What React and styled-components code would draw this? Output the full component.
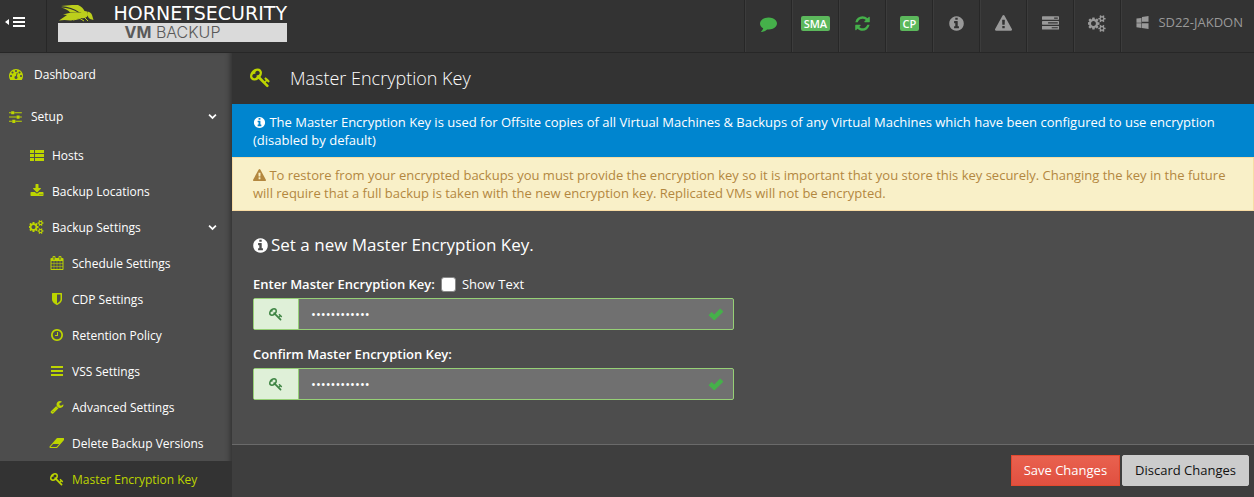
import React, { useState } from "react";
import styled, { createGlobalStyle, css } from "styled-components";

const GlobalStyle = createGlobalStyle`
  *, *::before, *::after { box-sizing: border-box; }
  body {
    margin: 0;
    background: #4d4d4d;
    color: #fff;
    font: 13px/18px "Open Sans", "Noto Sans", sans-serif;
  }
  button, input { font: inherit; }
`;

const knob = "q26 0 45 19t19 45v256q0 26-19 45t-45 19h-256q-26 0-45-19t-19-45v-256q0-26 19-45t45-19h256z";
const disc = "q0 209-103 385.5t-279.5 279.5-385.5 103-385.5-103-279.5-279.5-103-385.5 103-385.5 279.5-279.5 385.5-103 385.5 103 279.5 279.5 103 385.5z";
const dot = "q0-53-37.5-90.5t-90.5-37.5-90.5 37.5-37.5 90.5 37.5 90.5 90.5 37.5 90.5-37.5 37.5-90.5z";
const slab = "v256q0 26-19 45t-45 19h-1664q-26 0-45-19t-19-45v-256q0-26 19-45t45-19h1664q26 0 45 19t19 45z";
const smallCog = "v140q0 16-149 31-12 27-30 52 51 113 51 138 0 4-4 7-122 71-124 71-8 0-46-47t-52-68q-20 2-30 2t-30-2q-14 21-52 68t-46 47q-2 0-124-71-4-3-4-7 0-25 51-138-18-25-30-52-149-15-149-31v-140q0-16 149-31 13-29 30-52-51-113-51-138 0-4 4-7 4-2 35-20t59-34 30-16q8 0 46 46.5t52 67.5q20-2 30-2t30 2q51-71 92-112l6-2q4 0 124 70 4 3 4 7 0 25-51 138 17 23 30 52 149 15 149 31z";

const icons = {
  key: [1792, "M832 512q0-80-56-136t-136-56-136 56-56 136q0 42 19 83-41-19-83-19-80 0-136 56t-56 136 56 136 136 56 136-56 56-136q0-42-19-83 41 19 83 19 80 0 136-56t56-136zm851 704q0 17-49 66t-66 49q-9 0-28.5-16t-36.5-33-38.5-40-24.5-26l-96 96 220 220q28 28 28 68 0 42-39 81t-81 39q-40 0-68-28l-671-671q-176 131-365 131-163 0-265.5-102.5t-102.5-265.5q0-160 95-313t248-248 313-95q163 0 265.5 102.5t102.5 265.5q0 189-131 365l355 355 96-96q-3-3-26-24.5t-40-38.5-33-36.5-16-28.5q0-17 49-66t66-49q13 0 23 10 6 6 46 44.5t82 79.5 86.5 86 73 78 28.5 41z"],
  comment: [1792, "M1792 896q0 174-120 321.5t-326 233-450 85.5q-70 0-145-8-198 175-460 242-49 14-114 22-17 2-30.5-9t-17.5-29v-1q-3-4-.5-12t2-10 4.5-9.5l6-9 7-8.5 8-9q7-8 31-34.5t34.5-38 31-39.5 32.5-51 27-59 26-76q-157-89-247.5-220t-90.5-281q0-130 71-248.5t191-204.5 286-136.5 348-50.5q244 0 450 85.5t326 233 120 321.5z"],
  refresh: [1792, "M1639 1056q0 5-1 7-64 268-268 434.5t-478 166.5q-146 0-282.5-55t-243.5-157l-129 129q-19 19-45 19t-45-19-19-45v-448q0-26 19-45t45-19h448q26 0 45 19t19 45-19 45l-137 137q71 66 161 102t187 36q134 0 250-65t186-179q11-17 53-117 8-23 30-23h192q13 0 22.5 9.5t9.5 22.5zm25-800v448q0 26-19 45t-45 19h-448q-26 0-45-19t-19-45 19-45l138-138q-148-137-349-137-134 0-250 65t-186 179q-11 17-53 117-8 23-30 23h-199q-13 0-22.5-9.5t-9.5-22.5v-7q65-268 270-434.5t480-166.5q146 0 284 55.5t245 156.5l130-129q19-19 45-19t45 19 19 45z"],
  info: [1792, "M1152 1376v-160q0-14-9-23t-23-9h-96v-512q0-14-9-23t-23-9h-320q-14 0-23 9t-9 23v160q0 14 9 23t23 9h96v320h-96q-14 0-23 9t-9 23v160q0 14 9 23t23 9h448q14 0 23-9t9-23zm-128-896v-160q0-14-9-23t-23-9h-192q-14 0-23 9t-9 23v160q0 14 9 23t23 9h192q14 0 23-9t9-23zm640 416" + disc],
  warning: [1792, "M1024 1375v-190q0-14-9.5-23.5t-22.5-9.5h-192q-13 0-22.5 9.5t-9.5 23.5v190q0 14 9.5 23.5t22.5 9.5h192q13 0 22.5-9.5t9.5-23.5zm-2-374l18-459q0-12-10-19-13-11-24-11h-220q-11 0-24 11-10 7-10 21l17 457q0 10 10 16.5t24 6.5h185q14 0 23.5-6.5t10.5-16.5zm-14-934l768 1408q35 63-2 126-17 29-46.5 46t-63.5 17h-1536q-34 0-63.5-17t-46.5-46q-37-63-2-126l768-1408q17-31 47-49t65-18 65 18 47 49z"],
  tasks: [1792, "M1024 1408h640v-128h-640v128zm-384-512h1024v-128h-1024v128zm640-512h384v-128h-384v128zM1792 1216" + slab + "M1792 704" + slab + "M1792 192" + slab],
  cogs: [1920, "M832 896q0-106-75-181t-181-75-181 75-75 181 75 181 181 75 181-75 75-181zm768 512q0-52-38-90t-90-38-90 38-38 90q0 53 37.5 90.5t90.5 37.5 90.5-37.5 37.5-90.5zm0-1024q0-52-38-90t-90-38-90 38-38 90q0 53 37.5 90.5t90.5 37.5 90.5-37.5 37.5-90.5zm-384 421v185q0 10-7 19.5t-16 10.5l-155 24q-11 35-32 76 34 48 90 115 7 11 7 20 0 12-7 19-23 30-82.5 89.5t-78.5 59.5q-11 0-21-7l-115-90q-37 19-77 31-11 108-23 155-7 24-30 24h-186q-11 0-20-7.5t-10-17.5l-23-153q-34-10-75-31l-118 89q-7 7-20 7-11 0-21-8-144-133-144-160 0-9 7-19 10-14 41-53t47-61q-23-44-35-82l-152-24q-10-1-17-9.5t-7-19.5v-185q0-10 7-19.5t16-10.5l155-24q11-35 32-76-34-48-90-115-7-11-7-20 0-12 7-20 22-30 82-89t79-59q11 0 21 7l115 90q34-18 77-32 11-108 23-154 7-24 30-24h186q11 0 20 7.5t10 17.5l23 153q34 10 75 31l118-89q8-7 20-7 11 0 21 8 144 133 144 160 0 8-7 19-12 16-42 54t-45 60q23 48 34 82l152 23q10 2 17 10.5t7 19.5zm640 533" + smallCog + "M1856 314" + smallCog],
  windows: [1792, "M746 1006v651l-682-94v-557h682zm0-743v659h-682v-565zm982 743v786l-907-125v-661h907zm0-1006v794h-907v-669z"],
  dashboard: [1792, "M384 1152" + dot + "M576 704" + dot + "M1004 1185l101-382q6-26-7.5-48.5t-38.5-29.5-48 6.5-30 39.5l-101 382q-60 5-107 43.5t-63 98.5q-20 77 20 146t117 89 146-20 89-117q16-60-6-117t-72-91zM1664 1152" + dot + "M1024 512" + dot + "M1472 704" + dot + "M1792 1152q0 261-141 483-19 29-54 29h-1402q-35 0-54-29-141-221-141-483 0-182 71-348t191-286 286-191 348-71 348 71 286 191 191 286 71 348z"],
  sliders: [1536, "M0 1408h352v128H0zM704 1280" + knob + "M0 896h864v128H0zM0 384h224v128H0zM800 1408h736v128H800zM576 256" + knob + "M1216 768" + knob + "M1312 896h224v128h-224zM672 384h864v128H672z"],
  list: [1792, "M0 256h512v384H0zM640 256h1152v384H640zM0 768h512v384H0zM640 768h1152v384H640zM0 1280h512v384H0zM640 1280h1152v384H640z"],
  download: [1792, "M1344 1344q0-26-19-45t-45-19-45 19-19 45 19 45 45 19 45-19 19-45zm256 0q0-26-19-45t-45-19-45 19-19 45 19 45 45 19 45-19 19-45zm128-224v320q0 40-28 68t-68 28h-1472q-40 0-68-28t-28-68v-320q0-40 28-68t68-28h465l135 136q58 56 136 56t136-56l136-136h464q40 0 68 28t28 68zm-325-569q17 41-14 70l-448 448q-18 19-45 19t-45-19l-448-448q-31-29-14-70 17-39 59-39h256v-448q0-26 19-45t45-19h256q26 0 45 19t19 45v448h256q42 0 59 39z"],
  calendar: [1792, "M192 1664h288v-288h-288v288zm352 0h320v-288h-320v288zm-352-352h288v-320h-288v320zm352 0h320v-320h-320v320zm-352-384h288v-288h-288v288zm736 736h320v-288h-320v288zm-384-736h320v-288h-320v288zm768 736h288v-288h-288v288zm-384-352h320v-320h-320v320zm-352-864v-288q0-13-9.5-22.5t-22.5-9.5h-64q-13 0-22.5 9.5t-9.5 22.5v288q0 13 9.5 22.5t22.5 9.5h64q13 0 22.5-9.5t9.5-22.5zm736 864h288v-320h-288v320zm-384-384h320v-288h-320v288zm384 0h288v-288h-288v288zm32-480v-288q0-13-9.5-22.5t-22.5-9.5h-64q-13 0-22.5 9.5t-9.5 22.5v288q0 13 9.5 22.5t22.5 9.5h64q13 0 22.5-9.5t9.5-22.5zm384-64v1280q0 52-38 90t-90 38h-1408q-52 0-90-38t-38-90v-1280q0-52 38-90t90-38h128v-96q0-66 47-113t113-47h64q66 0 113 47t47 113v96h384v-96q0-66 47-113t113-47h64q66 0 113 47t47 113v96h128q52 0 90 38t38 90z"],
  shield: [1792, "M1344 960v-640h-448v1137q119-63 213-137 235-184 235-360zm192-768v768q0 86-33.5 170.5t-83 150-118 127.5-126.5 103-121 77.5-89.5 49.5-42.5 20q-12 6-26 6t-26-6q-16-7-42.5-20t-89.5-49.5-121-77.5-126.5-103-118-127.5-83-150-33.5-170.5v-768q0-26 19-45t45-19h1152q26 0 45 19t19 45z"],
  clock: [1792, "M1024 544v448q0 14-9 23t-23 9h-320q-14 0-23-9t-9-23v-64q0-14 9-23t23-9h224v-352q0-14 9-23t23-9h64q14 0 23 9t9 23zm416 352q0-148-73-273t-198-198-273-73-273 73-198 198-73 273 73 273 198 198 273 73 273-73 198-198 73-273zm224 0" + disc],
  bars: [1792, "M128 256h1536v256H128zM128 768h1536v256H128zM128 1280h1536v256H128z"],
  wrench: [1792, "M448 1472q0-26-19-45t-45-19-45 19-19 45 19 45 45 19 45-19 19-45zm644-420l-682 682q-37 37-90 37-52 0-91-37l-106-108q-38-36-38-90 0-53 38-91l681-681q39 98 114.5 173.5t173.5 114.5zm634-435q0 39-23 106-47 134-164.5 217.5t-258.5 83.5q-185 0-316.5-131.5t-131.5-316.5 131.5-316.5 316.5-131.5q58 0 121.5 16.5t107.5 46.5q16 11 16 28t-16 28l-293 169v224l193 107q5-3 79-48.5t135.5-81 70.5-35.5q15 0 23.5 10t8.5 25z"],
  eraser: [1984, "M960 1408l336-384h-768l-336 384h768zm1013-1077q15 34 9.5 71.5t-30.5 65.5l-896 1024q-38 44-96 44h-768q-38 0-69.5-20.5t-47.5-54.5q-15-34-9.5-71.5t30.5-65.5l896-1024q38-44 96-44h768q38 0 69.5 20.5t47.5 54.5z"],
  check: [1792, "M90 990L380 700Q420 670 460 700L700 940L1330 310Q1370 280 1410 310L1690 590Q1720 630 1690 670L740 1590Q700 1620 660 1590L90 1070Q60 1030 90 990z"],
  chevron: [1792, "M1700 640L896 1444 92 640 332 400 896 964 1460 400z"],
};

const IconSvg = styled.svg`
  flex: none;
  height: ${(p) => p.$size}px;
  fill: currentColor;
  vertical-align: -2px;
`;

function Icon({ name, size = 14 }) {
  const [width, path] = icons[name];
  return (
    <IconSvg $size={size} viewBox={`0 0 ${width} 1792`} aria-hidden="true">
      <path d={path} fillRule={name === "tasks" ? "evenodd" : "nonzero"} />
    </IconSvg>
  );
}

const Page = styled.div`
  display: flex;
  flex-direction: column;
  min-height: 100vh;
`;

const TopBar = styled.header`
  display: flex;
  height: 53px;
  background: #333;
  border-bottom: 1px solid #272727;
`;

const MenuToggle = styled.button`
  width: 47px;
  padding: 0 0 8px 5px;
  display: flex;
  align-items: center;
  color: #fff;
  background: none;
  border: 0;
  border-right: 1px solid #272727;
`;

const Brand = styled.a`
  width: 229px;
  margin: 4px auto 0 11px;
  color: #fff;
  text-decoration: none;
`;

const BrandTop = styled.span`
  display: flex;
  justify-content: space-between;
  height: 19px;
`;

const BrandName = styled.span`
  font: 19px/18px "DejaVu Sans", sans-serif;
`;

const BrandProduct = styled.span`
  display: block;
  height: 19px;
  background: #dadada;
  color: #595959;
  font: 300 16px/19px Inter, sans-serif;
  text-align: center;
`;

const ProductMark = styled.b`
  font-weight: 700;
`;

const TopNav = styled.nav`
  display: flex;
`;

const TopButton = styled.button`
  display: flex;
  align-items: center;
  justify-content: center;
  gap: 9px;
  min-width: 47px;
  padding: ${(p) => (p.$wide ? "0 11px 8px 15px" : "0 0 6px")};
  border: 0;
  border-left: 1px solid #272727;
  box-shadow: inset 1px 0 #3c3c3c;
  background: none;
  color: ${(p) => (p.$active ? "#45b04a" : "#999")};
`;

const Badge = styled.span`
  padding: 0 3px;
  border-radius: 2px;
  background: #5cb85c;
  color: #fff;
  font-size: 11px;
  font-weight: 600;
  line-height: 15px;
`;

const Body = styled.div`
  display: flex;
  flex: 1;
`;

const Sidebar = styled.nav`
  flex: none;
  width: 232px;
  background: #4d4d4d;
  box-shadow: inset -5px 0 5px -3px #333;
  font-size: 12px;
`;

const NavItem = styled.a`
  display: flex;
  align-items: center;
  gap: ${(p) => p.$gap || 8}px;
  height: ${(p) => (p.$depth === 0 ? 42 : 36)}px;
  padding-left: ${(p) => [8, 29, 49][p.$depth]}px;
  padding-right: 15px;
  color: #fff;
  text-decoration: none;
  ${(p) => p.$current && css`
    background: #333;
    color: #bdd500;
  `}
`;

const NavIcon = styled.span`
  display: flex;
  justify-content: center;
  width: 15px;
  color: #bdd500;
`;

const NavLabel = styled.span`
  padding-top: 2px;
`;

const NavArrow = styled.span`
  display: flex;
  margin-left: auto;
`;

const Main = styled.main`
  flex: 1;
  min-width: 0;
  display: flex;
  flex-direction: column;
`;

const TitleBar = styled.div`
  display: flex;
  align-items: center;
  gap: 19px;
  height: 51px;
  padding: 0 18px 2px;
  background: #333;
  color: #bdd500;
`;

const Title = styled.h1`
  margin: 0;
  color: #fff;
  font-size: 18px;
  line-height: 24px;
  font-weight: 300;
`;

const Notice = styled.p`
  margin: 0;
  padding: 9px 21px 8px;
  background: #0085cf;
  ${(p) => p.$warning && css`
    padding: 8px 20px;
    border: 1px solid #f8dca4;
    background: #f9f0c8;
    color: #b3873f;
  `}
`;

const Form = styled.form`
  flex: 1;
  display: flex;
  flex-direction: column;
`;

const Fields = styled.div`
  flex: 1;
  padding: 22px 20px;
`;

const Heading = styled.h2`
  display: flex;
  align-items: center;
  gap: 2px;
  margin: 0 0 18px;
  font-size: 17px;
  line-height: 24px;
  font-weight: 400;
`;

const Field = styled.div`
  max-width: 482px;
  padding-left: 1px;
  margin-bottom: 15px;
`;

const LabelRow = styled.div`
  display: flex;
  align-items: center;
  gap: 6px;
  height: 18px;
  margin-bottom: 5px;
`;

const FieldLabel = styled.label`
  font-weight: ${(p) => (p.$strong ? 600 : 400)};
`;

const CheckBox = styled.input`
  appearance: none;
  width: 15px;
  height: 15px;
  margin: 0;
  border: 1px solid #8a8a8a;
  border-radius: 3px;
  background: #fff;
  &:checked { background: #45b04a; }
`;

const InputGroup = styled.div`
  display: flex;
  align-items: center;
  height: 32px;
  border: 1px solid #96d076;
  border-radius: 2px;
  background: #707070;
  color: #45b04a;
  padding-right: 9px;
`;

const Addon = styled.span`
  display: flex;
  align-items: center;
  justify-content: center;
  align-self: stretch;
  width: 45px;
  background: #dff0d8;
  border-right: 1px solid #96d076;
  color: #3f8544;
`;

const KeyInput = styled.input`
  flex: 1;
  min-width: 0;
  padding: 0 12px;
  border: 0;
  outline: 0;
  background: none;
  color: #fff;
`;

const Footer = styled.footer`
  display: flex;
  justify-content: flex-end;
  align-items: center;
  gap: 2px;
  height: 53px;
  padding: 0 5px 2px;
  border-top: 1px solid #6a6a6a;
  background: #3e3e3e;
`;

const Action = styled.button`
  height: 31px;
  padding: 0 12px;
  border: 1px solid ${(p) => (p.$primary ? "#e2492f" : "#ccc")};
  border-radius: ${(p) => (p.$primary ? 0 : 2)}px;
  background: ${(p) => (p.$primary ? "linear-gradient(#e9614f, #e05040)" : "#ccc")};
  color: ${(p) => (p.$primary ? "#fff" : "#111")};
`;

const navItems = [
  { label: "Dashboard", icon: "dashboard", depth: 0, gap: 11 },
  { label: "Setup", icon: "sliders", size: 15, depth: 0, open: true },
  { label: "Hosts", icon: "list", depth: 1 },
  { label: "Backup Locations", icon: "download", depth: 1 },
  { label: "Backup Settings", icon: "cogs", depth: 1, open: true },
  { label: "Schedule Settings", icon: "calendar", depth: 2 },
  { label: "CDP Settings", icon: "shield", depth: 2 },
  { label: "Retention Policy", icon: "clock", depth: 2 },
  { label: "VSS Settings", icon: "bars", depth: 2 },
  { label: "Advanced Settings", icon: "wrench", depth: 2 },
  { label: "Delete Backup Versions", icon: "eraser", depth: 2 },
  { label: "Master Encryption Key", icon: "key", depth: 2, current: true },
];

const topItems = [
  { label: "Messages", icon: "comment", active: true },
  { label: "SMA", badge: true },
  { label: "Refresh", icon: "refresh", active: true },
  { label: "CP", badge: true },
  { label: "Information", icon: "info" },
  { label: "Alerts", icon: "warning" },
  { label: "Tasks", icon: "tasks" },
  { label: "Settings", icon: "cogs" },
];

function Hornet() {
  return (
    <svg width="36" height="18" viewBox="0 0 36 18" fill="#bccf1c" aria-hidden="true">
      <path d="M3 2L14 1L20 1Q25 3 27 8L21 8Q14 3 3 2Z" />
      <path d="M3 3.500Q13 4 20 8.500L12 8.500Q10 5.500 3 3.500Z" />
      <path d="M1 16.500L9 11L5 10.500Q12 8 20 8.500L27 8Q26 12 23 14L13 16.500Q6 15.500 1 16.500Z" />
      <path d="M22 9.500Q25 6 29 7.500L30 11Q28 15 23 14Z" />
      <path d="M29.500 7.500Q33 8 34 11L35.500 16L32 15Q28.500 12 29.500 7.500Z" />
      <path d="M15 16L22 14.500L26 17M26 13L30 17" fill="none" stroke="#bccf1c" />
    </svg>
  );
}

function PasswordField({ id, label, visible, children }) {
  const [value, setValue] = useState("masterkey123");
  return (
    <Field>
      <LabelRow>
        <FieldLabel $strong htmlFor={id}>{label}</FieldLabel>
        {children}
      </LabelRow>
      <InputGroup>
        <Addon><Icon name="key" /></Addon>
        <KeyInput id={id} type={visible ? "text" : "password"} value={value} onChange={(e) => setValue(e.target.value)} />
        <Icon name="check" size={16} />
      </InputGroup>
    </Field>
  );
}

export default function App() {
  const [visible, setVisible] = useState(false);
  return (
    <Page>
      <GlobalStyle />
      <TopBar>
        <MenuToggle aria-label="Collapse menu">
          <svg width="21" height="14" viewBox="0 0 21 14" fill="currentColor" aria-hidden="true">
            <path d="M4 4v6L0 7zM8 2h12v2H8zM8 6h12v2H8zM8 10h12v2H8z" />
          </svg>
        </MenuToggle>
        <Brand href="#">
          <BrandTop>
            <Hornet />
            <BrandName>HORNETSECURITY</BrandName>
          </BrandTop>
          <BrandProduct><ProductMark>VM</ProductMark> BACKUP</BrandProduct>
        </Brand>
        <TopNav>
          {topItems.map((item) => (
            <TopButton key={item.label} $active={item.active} aria-label={item.label}>
              {item.badge ? <Badge>{item.label}</Badge> : <Icon name={item.icon} size={17} />}
            </TopButton>
          ))}
          <TopButton $wide>
            <Icon name="windows" size={13} />
            SD22-JAKDON
          </TopButton>
        </TopNav>
      </TopBar>
      <Body>
        <Sidebar>
          {navItems.map((item) => (
            <NavItem key={item.label} href="#" $depth={item.depth} $gap={item.gap} $current={item.current}>
              <NavIcon><Icon name={item.icon} size={item.size} /></NavIcon>
              <NavLabel>{item.label}</NavLabel>
              {item.open && <NavArrow><Icon name="chevron" size={9} /></NavArrow>}
            </NavItem>
          ))}
        </Sidebar>
        <Main>
          <TitleBar>
            <Icon name="key" size={21} />
            <Title>Master Encryption Key</Title>
          </TitleBar>
          <Notice>
            <Icon name="info" size={13} /> The Master Encryption Key is used for Offsite copies of all Virtual Machines &amp; Backups of any Virtual Machines which have been configured to use encryption (disabled by default)
          </Notice>
          <Notice $warning>
            <Icon name="warning" size={13} /> To restore from your encrypted backups you must provide the encryption key so it is important that you store this key securely. Changing the key in the future will require that a full backup is taken with the new encryption key. Replicated VMs will not be encrypted.
          </Notice>
          <Form onSubmit={(e) => e.preventDefault()}>
            <Fields>
              <Heading><Icon name="info" size={17} />Set a new Master Encryption Key.</Heading>
              <PasswordField id="key" label="Enter Master Encryption Key:" visible={visible}>
                <CheckBox id="show" type="checkbox" checked={visible} onChange={(e) => setVisible(e.target.checked)} />
                <FieldLabel htmlFor="show">Show Text</FieldLabel>
              </PasswordField>
              <PasswordField id="confirm" label="Confirm Master Encryption Key:" visible={visible} />
            </Fields>
            <Footer>
              <Action $primary type="submit">Save Changes</Action>
              <Action type="button">Discard Changes</Action>
            </Footer>
          </Form>
        </Main>
      </Body>
    </Page>
  );
}
